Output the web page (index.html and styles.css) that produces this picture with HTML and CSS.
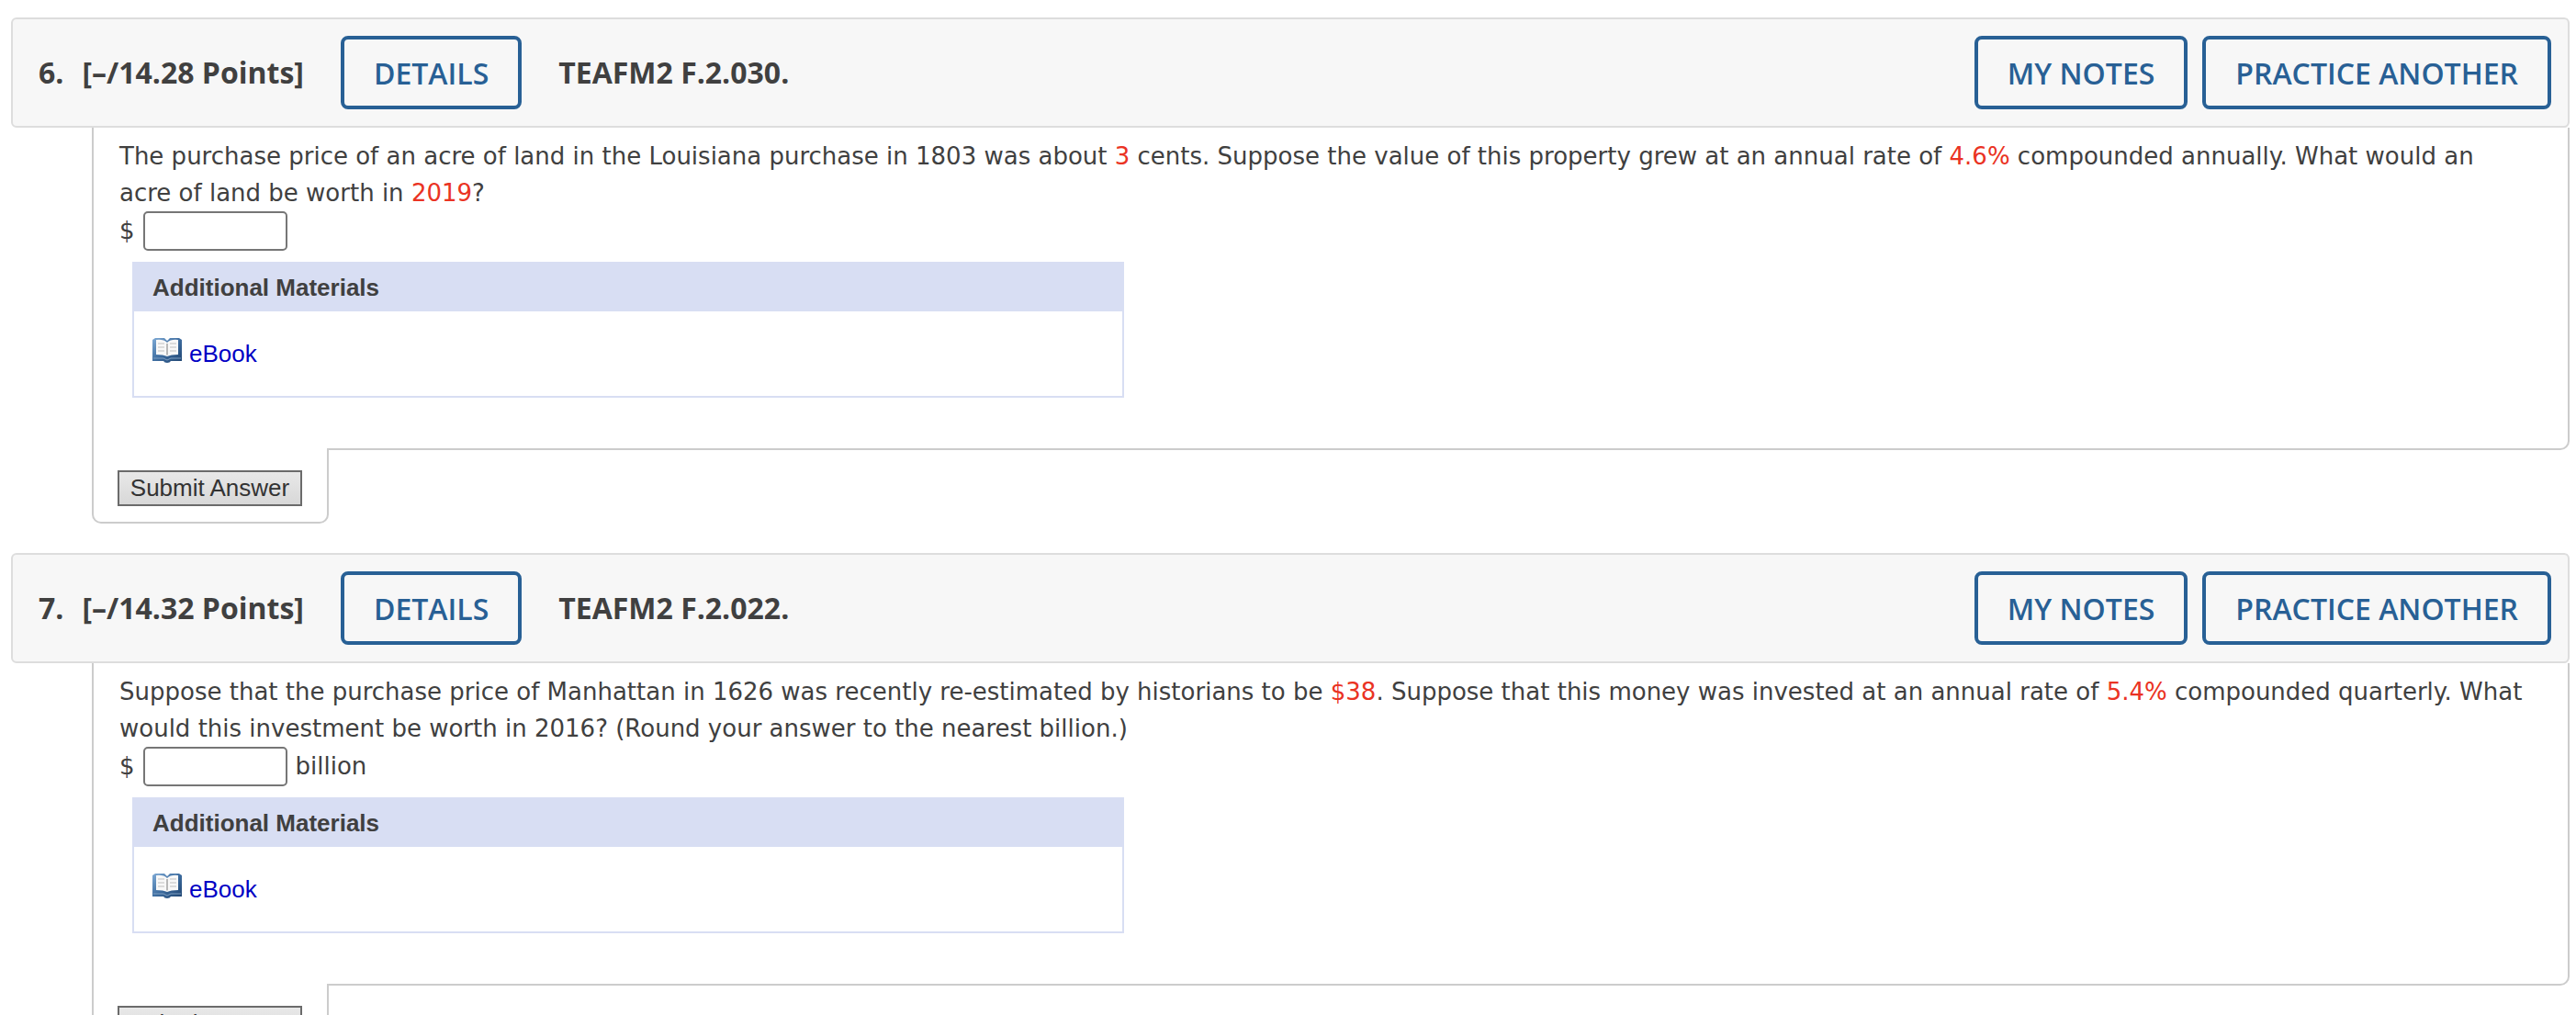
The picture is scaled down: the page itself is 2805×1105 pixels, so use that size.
FILE: index.html
```
<!DOCTYPE html>
<html lang="en">
<head>
    <meta charset="UTF-8">
    <title>Homework</title>
    <link rel="stylesheet" href="styles.css">
</head>
<body>

    <!-- shared book icon -->
    <svg class="sprite" aria-hidden="true">
        <defs>
            <linearGradient id="cover" x1="0" y1="0" x2="1" y2="1">
                <stop offset="0" stop-color="#7fabd6"/>
                <stop offset="0.5" stop-color="#3d6c9f"/>
                <stop offset="1" stop-color="#1f4470"/>
            </linearGradient>
        </defs>
        <symbol id="book" viewBox="0 0 32 28">
            <path d="M0 3l3-2h10l3 3 3-3h10l3 2v23H20q-1 2-4 2t-4-2H0z" fill="url(#cover)"/>
            <path d="M1 23h11l4 2 4-2h11" fill="none" stroke="#7f9fc2"/>
            <path d="M4 3q8-1 12 3 4-4 12-3v16q-8 0-12 2-4-2-12-2z" fill="#f8f8f8"/>
            <path d="M15 7h2v12l-1 1-1-1z" fill="#b8b8b8"/>
            <path d="M6 7h7M6 11h7M6 15h7M19 7h7M19 11h7M19 15h7" stroke="#c0c0c0"/>
        </symbol>
    </svg>

    <section class="question">
        <header class="question-header">
            <h2 class="number">6.</h2>
            <span class="points">[–/14.28 Points]</span>
            <button class="btn" type="button">DETAILS</button>
            <span class="code">TEAFM2 F.2.030.</span>
            <div class="actions">
                <button class="btn" type="button">MY NOTES</button>
                <button class="btn" type="button">PRACTICE ANOTHER</button>
            </div>
        </header>
        <form class="question-form">
            <div class="question-body">
                <p class="prompt">The purchase price of an acre of land in the Louisiana purchase in 1803 was about <span class="value">3</span> cents. Suppose the value of this property grew at an annual rate of <span class="value">4.6%</span> compounded annually. What would an acre of land be worth in <span class="value">2019</span>?</p>
                <div class="answer">
                    <label for="answer6">$</label>
                    <input type="text" id="answer6">
                </div>
                <div class="materials">
                    <h3>Additional Materials</h3>
                    <div class="materials-list">
                        <a href="#"><svg class="icon" aria-hidden="true"><use href="#book"/></svg>eBook</a>
                    </div>
                </div>
            </div>
            <div class="submit-tab">
                <button class="submit" type="button">Submit Answer</button>
            </div>
        </form>
    </section>

    <section class="question">
        <header class="question-header">
            <h2 class="number">7.</h2>
            <span class="points">[–/14.32 Points]</span>
            <button class="btn" type="button">DETAILS</button>
            <span class="code">TEAFM2 F.2.022.</span>
            <div class="actions">
                <button class="btn" type="button">MY NOTES</button>
                <button class="btn" type="button">PRACTICE ANOTHER</button>
            </div>
        </header>
        <form class="question-form">
            <div class="question-body">
                <p class="prompt">Suppose that the purchase price of Manhattan in 1626 was recently re-estimated by historians to be <span class="value">$38</span>. Suppose that this money was invested at an annual rate of <span class="value">5.4%</span> compounded quarterly. What would this investment be worth in 2016? (Round your answer to the nearest billion.)</p>
                <div class="answer">
                    <label for="answer7">$</label>
                    <input type="text" id="answer7">
                    <span>billion</span>
                </div>
                <div class="materials">
                    <h3>Additional Materials</h3>
                    <div class="materials-list">
                        <a href="#"><svg class="icon" aria-hidden="true"><use href="#book"/></svg>eBook</a>
                    </div>
                </div>
            </div>
            <div class="submit-tab">
                <button class="submit" type="button">Submit Answer</button>
            </div>
        </form>
    </section>

</body>
</html>
```
FILE: styles.css
```
* {
    box-sizing: border-box;
}

html {
    overflow-x: hidden;
    scrollbar-width: none;
}

body {
    margin: 0;
    padding: 19px 7px 0 12px;
    background-color: #fff;
    color: #404040;
    font-family: Verdana, "DejaVu Sans", sans-serif;
    font-size: 26px;
    line-height: 40px;
}

.sprite {
    position: absolute;
    width: 0;
    height: 0;
}

.question {
    margin-bottom: 32px;
}

.question-header {
    display: flex;
    align-items: center;
    padding: 18px 18px 18px 28px;
    border: 2px solid #ddd;
    border-radius: 6px;
    background-color: #f7f7f7;
    font-family: "Open Sans", sans-serif;
    font-size: 32px;
    font-weight: 700;
}

.number {
    margin: 0 20px 0 0;
    font-size: 32px;
}

.points,
.code {
    margin-right: 40px;
}

.actions {
    display: flex;
    gap: 16px;
    margin-left: auto;
}

.btn {
    height: 80px;
    padding: 0 32px;
    border: 4px solid #286095;
    border-radius: 8px;
    background: none;
    color: #286095;
    font-family: inherit;
    font-size: 32px;
    font-weight: 600;
    cursor: pointer;
}

.question-header > .btn {
    margin-right: 40px;
}

.question-form {
    margin-left: 88px;
}

.question-body {
    padding: 11px 44px 55px 28px;
    border: 2px solid #ccc;
    border-top: none;
    border-radius: 0 0 10px 0;
}

.prompt {
    margin: 0;
}

.value {
    color: #ea3323;
}

.answer {
    display: flex;
    align-items: center;
    gap: 9px;
    height: 42px;
}

.answer input {
    width: 157px;
    height: 43px;
    border: 2px solid #767676;
    border-radius: 5px;
    font-size: 26px;
}

.materials {
    max-width: 1080px;
    margin: 13px 0 0 14px;
    border: 2px solid #d8def3;
    font-family: Arial, "Liberation Sans", sans-serif;
}

.materials h3 {
    margin: 0;
    padding: 6px 20px;
    background-color: #d8def3;
    font-size: 26px;
}

.materials-list {
    padding: 26px 20px;
}

.materials a {
    display: flex;
    align-items: center;
    gap: 8px;
    color: #0000c4;
    text-decoration: none;
}

.icon {
    width: 32px;
    height: 28px;
    margin-bottom: 8px;
}

/* covers the bottom border of the question body */
.submit-tab {
    position: relative;
    width: 258px;
    margin-top: -2px;
    padding: 24px 26px 17px;
    border: 2px solid #ccc;
    border-top: none;
    border-radius: 0 0 10px 10px;
    background-color: #fff;
}

.submit {
    display: block;
    width: 201px;
    height: 39px;
    padding: 0;
    border: 2px solid #6b6b6b;
    background: linear-gradient(#e8e8e8, #d8d8d8);
    color: #333;
    font-family: Arial, "Liberation Sans", sans-serif;
    font-size: 26px;
    line-height: 35px;
    cursor: pointer;
}
```
